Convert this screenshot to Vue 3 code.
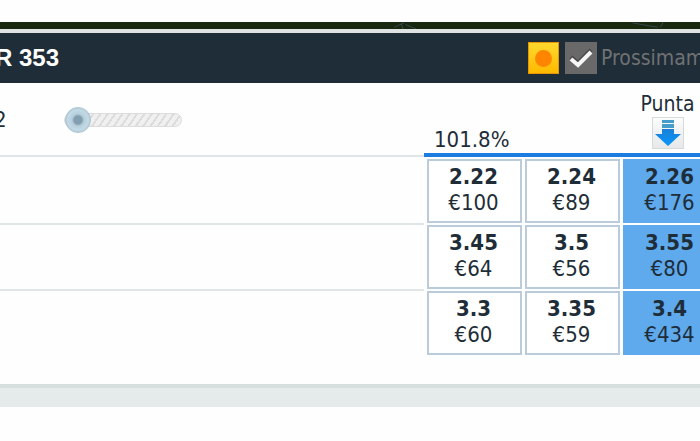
<script setup>
import { ref } from 'vue'

const level = ref(0)
const following = ref(true)
const rows = [
  [
    { odds: '2.22', stake: '€100' },
    { odds: '2.24', stake: '€89' },
    { odds: '2.26', stake: '€176' },
  ],
  [
    { odds: '3.45', stake: '€64' },
    { odds: '3.5', stake: '€56' },
    { odds: '3.55', stake: '€80' },
  ],
  [
    { odds: '3.3', stake: '€60' },
    { odds: '3.35', stake: '€59' },
    { odds: '3.4', stake: '€434' },
  ],
]
</script>

<template>
  <main class="page">
    <div class="pitch">
      <svg class="pitch-art left-art" viewBox="0 0 40 8" aria-hidden="true">
        <path d="M2 6 13 1M10 2l2 6M15 3l12 5" />
      </svg>
      <svg class="pitch-art right-art" viewBox="0 0 40 8" aria-hidden="true">
        <path d="M0 1l29 5M35 0l-3 6" />
      </svg>
    </div>
    <section class="market">
      <header class="bar">
        <h1 class="title">R 353</h1>
        <div class="status">
          <button class="live" type="button" aria-label="Live">
            <span class="dot"></span>
          </button>
          <label class="soon">
            <input v-model="following" class="check" type="checkbox" />
            <svg class="tick" viewBox="0 0 32 32" aria-hidden="true">
              <path class="tick-shade" d="M6 15l7 6L26 8" />
              <path class="tick-line" d="M6 17l7 6L26 10" />
            </svg>
            <span>Prossimam</span>
          </label>
        </div>
      </header>
      <table class="grid">
        <colgroup>
          <col />
          <col class="price-col" />
          <col class="price-col" />
          <col class="price-col" />
        </colgroup>
        <thead>
          <tr>
            <th class="name">
              <label class="range">
                <span class="range-label">2</span>
                <input v-model="level" class="slider" type="range" min="0" max="100" />
              </label>
            </th>
            <th class="head" colspan="2"><span class="percent">101.8%</span></th>
            <th class="head back">
              <span class="back-label">Punta</span>
              <button class="arrow" type="button" aria-label="Punta">
                <svg viewBox="0 0 30 30" aria-hidden="true">
                  <defs>
                    <linearGradient id="arrowFill" x1="0" y1="0" x2="0" y2="1">
                      <stop offset="0" stop-color="#1b80d8" />
                      <stop offset="1" stop-color="#0796fa" />
                    </linearGradient>
                  </defs>
                  <path d="M9 2h12v3H9zM9 6h12v4H9z" fill="#459dcb" />
                  <path d="M9 11h12v5h7L15 28 2 16h7z" fill="url(#arrowFill)" />
                </svg>
              </button>
            </th>
          </tr>
        </thead>
        <tbody>
          <tr v-for="(row, r) in rows" :key="r">
            <td class="name"></td>
            <td v-for="(price, c) in row" :key="c" class="cell">
              <button type="button" class="price" :class="{ best: c === 2 }">
                <strong>{{ price.odds }}</strong>
                <span>{{ price.stake }}</span>
              </button>
            </td>
          </tr>
        </tbody>
      </table>
    </section>
    <footer class="foot"></footer>
  </main>
</template>

<style>
body {
  background: #fefefe;
}
</style>

<style scoped>
.page {
  padding-top: 22px;
  overflow: hidden;
  color: #1e2d38;
  font-family: "DejaVu Sans Condensed", "DejaVu Sans", sans-serif;
  font-size: 22px;
  line-height: 26px;
}
.pitch {
  display: flex;
  justify-content: flex-end;
  height: 7px;
  background: #18290f;
  border-bottom: 4px solid #dfe3e4;
}
.pitch-art {
  width: 40px;
  height: 7px;
  fill: none;
  stroke: #3d4a58;
  stroke-width: 1;
}
.left-art {
  margin-right: 200px;
}
.right-art {
  margin-right: 30px;
}
.market {
  margin-right: -18px;
  padding-bottom: 29px;
}
.bar {
  display: flex;
  align-items: center;
  justify-content: space-between;
  height: 50px;
  background: #1e2d38;
}
.title {
  margin: 0 0 0 -5px;
  color: #fff;
  font-family: "Liberation Sans", Arial, sans-serif;
  font-size: 24px;
  font-weight: 700;
}
.status {
  display: flex;
  align-items: center;
  gap: 6px;
  width: 190px;
  font-size: 21px;
  white-space: nowrap;
}
.live {
  display: flex;
  flex: none;
  align-items: center;
  justify-content: center;
  width: 31px;
  height: 32px;
  padding: 0;
  background: linear-gradient(#ffd82e, #ffb900);
  border: 1px solid #e89500;
}
.dot {
  width: 17px;
  height: 17px;
  border-radius: 50%;
  background: #ff8500;
}
.soon {
  display: grid;
  flex: none;
  grid-template-columns: 32px auto;
  align-items: center;
  column-gap: 4px;
  color: #707172;
}
.check,
.tick {
  grid-area: 1 / 1;
  width: 32px;
  height: 32px;
  margin: 0;
}
.check {
  appearance: none;
  background: #696969;
}
.tick {
  pointer-events: none;
  visibility: hidden;
  fill: none;
  stroke-width: 4;
}
.check:checked + .tick {
  visibility: visible;
}
.tick-shade {
  stroke: #494949;
}
.tick-line {
  stroke: #f7f7f7;
}
.grid {
  width: 100%;
  table-layout: fixed;
  border-collapse: separate;
  border-spacing: 0;
}
.price-col {
  width: 98px;
}
th,
td {
  padding: 0;
  font-weight: 400;
}
th {
  box-sizing: border-box;
  height: 74px;
}
th.name {
  padding-top: 2px;
  border-bottom: 2px solid #dfe6e5;
}
tbody tr + tr .name {
  border-top: 2px solid #dfe6e5;
}
.range {
  display: flex;
  align-items: center;
  gap: 57px;
  margin-left: -6px;
}
.slider {
  appearance: none;
  width: 118px;
  height: 26px;
  margin: 0;
  background: none;
}
.slider::-webkit-slider-runnable-track {
  height: 14px;
  border: 1px solid #dcdcdc;
  border-radius: 7px;
  box-sizing: border-box;
  background: repeating-linear-gradient(125deg, #f0f0f0 0 4px, #dcdcdc 4px 6px);
}
.slider::-webkit-slider-thumb {
  appearance: none;
  width: 26px;
  height: 26px;
  margin-top: -7px;
  border: 1px solid #abc3d2;
  border-radius: 50%;
  box-sizing: border-box;
  background: radial-gradient(circle, #839eae 0 4px, #b6cfdd 6px, #c3d9e5 10px, #b4cbd9 13px);
}
.head {
  border-bottom: 4px solid #1c7ce0;
  text-align: left;
  vertical-align: bottom;
}
.percent {
  display: block;
  padding-left: 10px;
}
.back {
  text-align: center;
}
.back-label {
  display: block;
  padding-right: 3px;
  font-size: 21px;
}
.arrow {
  display: block;
  width: 32px;
  height: 32px;
  margin: 0 0 4px 32px;
  padding: 0;
  background: linear-gradient(#fbfcfc, #e6e8e9);
  border: 1px solid #d5dadb;
}
.arrow svg {
  display: block;
  width: 30px;
  height: 30px;
}
.cell {
  padding: 2px 0 0 3px;
}
.price {
  display: flex;
  flex-direction: column;
  align-items: center;
  justify-content: center;
  width: 100%;
  height: 64px;
  padding: 0 2px 2px 0;
  background: #fff;
  border: 2px solid #bacbdc;
  color: inherit;
  font: inherit;
}
.best {
  background: #5fa9ed;
  border-color: #5fa9ed;
}
.foot {
  height: 19px;
  background: #e5eaea;
  border-top: 4px solid #d7dfdf;
}
</style>
